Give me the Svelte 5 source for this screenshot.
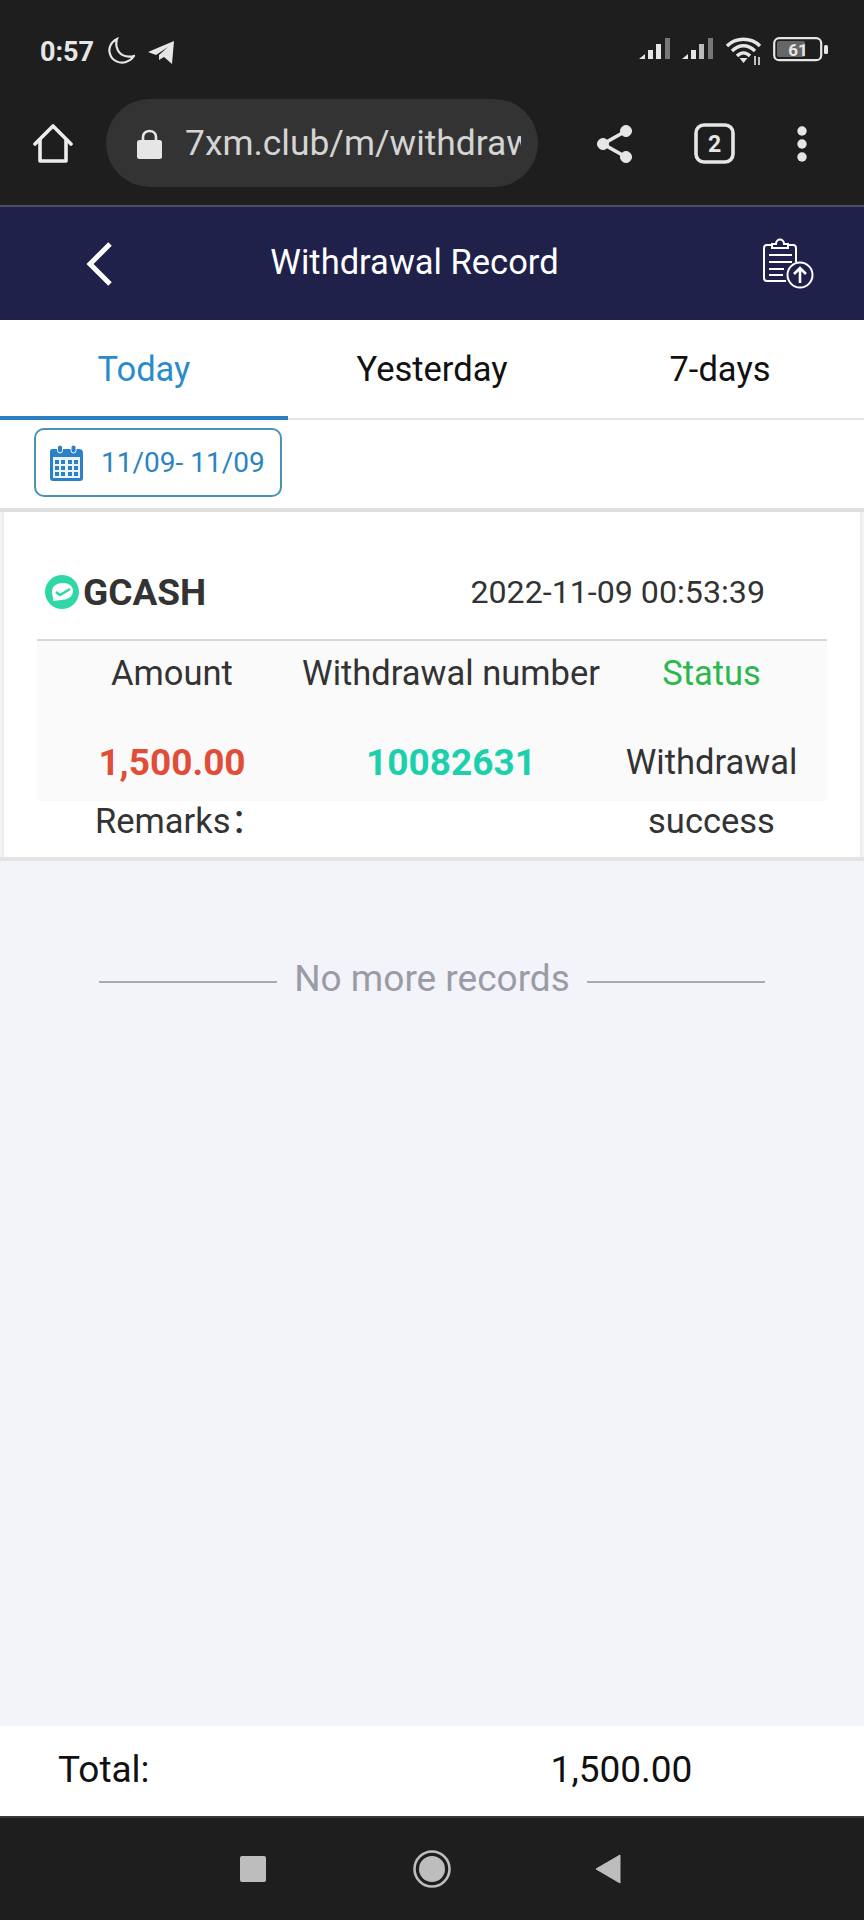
<script>
    const tabs = ["Today", "Yesterday", "7-days"];
    let active = 0;
</script>

<style>
    :global(body) {
        margin: 0;
        background: #f3f4f9;
    }
    .page {
        width: 864px;
        height: 1920px;
        display: flex;
        flex-direction: column;
        font-family: Roboto, "Noto Sans CJK SC", sans-serif;
        color: #333;
        overflow: hidden;
    }
    svg {
        display: block;
        flex: none;
    }
    .statusbar {
        height: 99px;
        box-sizing: border-box;
        background: #1e1e1e;
        display: flex;
        align-items: flex-start;
        padding: 37px 36px 0 40px;
        color: #e6e6e6;
    }
    .time {
        font-size: 27px;
        font-weight: 700;
        line-height: 30px;
        margin-right: 13px;
    }
    .moon {
        margin-right: 12px;
    }
    .tele {
        margin-top: 3px;
    }
    .status-right {
        margin-left: auto;
        display: flex;
        gap: 11px;
        align-items: flex-start;
    }
    .toolbar {
        height: 106px;
        box-sizing: border-box;
        background: #1e1e1e;
        display: flex;
        align-items: flex-start;
        padding-left: 33px;
    }
    .home {
        margin-top: 24px;
        margin-right: 33px;
    }
    .url {
        width: 432px;
        height: 88px;
        box-sizing: border-box;
        border-radius: 44px;
        background: #333;
        display: flex;
        align-items: center;
        padding: 0 17px 0 31px;
        color: #d4d4d4;
        font-size: 35.4px;
        gap: 23px;
    }
    .url span {
        overflow: hidden;
        white-space: nowrap;
    }
    .share {
        margin: 26px 61px 0 59px;
    }
    .count {
        margin-top: 24px;
        margin-right: 62px;
    }
    .dots {
        margin-top: 27px;
    }
    .header {
        height: 115px;
        box-sizing: border-box;
        border-top: 2px solid #4c4c62;
        background: #20214a;
        display: flex;
        align-items: center;
        position: relative;
        color: #fff;
        padding-left: 84px;
    }
    .title {
        position: absolute;
        left: 0;
        right: 35px;
        top: 25px;
        line-height: 60px;
        text-align: center;
        font-size: 34.5px;
    }
    .upload {
        margin-left: auto;
        margin-right: 50px;
    }
    .tabs {
        height: 100px;
        box-sizing: border-box;
        display: flex;
        background: #fff;
        border-bottom: 2px solid #e4e4e6;
    }
    .tab {
        flex: 1 1 0;
        height: 100px;
        box-sizing: border-box;
        text-align: center;
        font-size: 34.5px;
        line-height: 98px;
        color: #111;
    }
    .tab.active {
        color: #2b8ccb;
        border-bottom: 4px solid #2b80c4;
    }
    .dates {
        height: 92px;
        box-sizing: border-box;
        background: #fff;
        border-bottom: 4px solid #dfdfdf;
        padding: 8px 0 0 34px;
    }
    .date-btn {
        width: 248px;
        height: 69px;
        box-sizing: border-box;
        border: 2px solid #4a93b5;
        border-radius: 10px;
        display: flex;
        align-items: center;
        gap: 18px;
        padding-left: 14px;
        color: #2b84c0;
        font-size: 28px;
    }
    .card {
        margin: 0 2px;
        height: 345px;
        box-sizing: border-box;
        background: #fff;
        border-left: 2px solid #ececec;
        border-right: 2px solid #ececec;
        padding: 0 33px;
        flex: none;
    }
    .card-head {
        height: 129px;
        box-sizing: border-box;
        padding: 33px 62px 0 8px;
        display: flex;
        align-items: center;
        border-bottom: 2px solid #d8d8d8;
    }
    .card-head b {
        font-size: 37px;
        margin-left: 4px;
    }
    .card-head span {
        margin-left: auto;
        font-size: 32.2px;
    }
    .table {
        height: 160px;
        background: #fafafa;
        display: grid;
        grid-template-columns: 270px 288px 233px;
        grid-template-rows: 70px 59px;
        text-align: center;
        font-size: 34.5px;
    }
    .table > div {
        line-height: 59px;
    }
    .label {
        padding-top: 3px;
        white-space: nowrap;
        display: flex;
        justify-content: center;
    }
    .status {
        color: #2bb84c;
    }
    .amount,
    .number {
        font-size: 37px;
        font-weight: 700;
        padding-top: 22px;
    }
    .amount {
        color: #e24d37;
    }
    .number {
        color: #1dd0ad;
    }
    .result {
        padding-top: 22px;
    }
    .remarks {
        height: 40px;
        line-height: 40px;
        font-size: 34.5px;
        padding-left: 58px;
    }
    .list {
        flex: 1;
        border-top: 4px solid #e4e4e4;
        padding-top: 92px;
        display: flex;
        align-items: flex-start;
        color: #9a9ba6;
        font-size: 37px;
        line-height: 52px;
        justify-content: center;
    }
    .list i {
        display: block;
        width: 178px;
        height: 2px;
        background: #a9a9b0;
        margin-top: 28px;
    }
    .list span {
        margin: 0 17px;
    }
    .total {
        height: 86px;
        padding-bottom: 4px;
        flex: none;
        background: #fff;
        display: flex;
        align-items: center;
        padding-left: 58px;
        color: #111;
        font-size: 37px;
    }
    .total span:last-child {
        margin-left: 401px;
    }
    .navbar {
        height: 104px;
        flex: none;
        box-sizing: border-box;
        background: #1e1e1e;
        border-top: 2px solid #3a3a3a;
        display: flex;
        align-items: center;
        padding: 0 0 0 240px;
    }
    .square {
        width: 26px;
        height: 26px;
        background: #bdbdbd;
        border-radius: 2px;
        margin-right: 147px;
    }
    .circle {
        margin-right: 144px;
    }
</style>

<div class="page">
    <div class="statusbar">
        <span class="time">0:57</span>
        <svg class="moon" width="28" height="28" viewBox="0 0 28 28" fill="none" stroke="#e6e6e6" stroke-width="2.2">
            <path d="M10 2 C4 5 1 11 3 17 C5 24 13 27 19 25 C22 24 25 22 27 19 C19 21 12 18 10 11 C9 8 9 5 10 2 Z" />
        </svg>
        <svg class="tele" width="28" height="24" viewBox="0 0 28 24" fill="#e6e6e6">
            <path d="M1 12 L27 1 L25 24 L17 17 L12 20 L12 15 L21 7 L9 15 Z" />
        </svg>
        <div class="status-right">
            <svg width="32" height="24" viewBox="0 0 32 24" fill="#e6e6e6">
                <path d="M0 22 L6 17 L6 22 Z" />
                <rect x="9" y="13" width="5" height="9" />
                <rect x="17" y="7" width="5" height="15" />
                <rect x="26" y="1" width="5" height="21" fill="#777" />
            </svg>
            <svg width="33" height="24" viewBox="0 0 33 24" fill="#e6e6e6">
                <path d="M0 22 L6 17 L6 22 Z" />
                <rect x="9" y="13" width="5" height="9" />
                <rect x="17" y="7" width="5" height="15" fill="#bbb" />
                <rect x="26" y="1" width="5" height="21" fill="#777" />
            </svg>
            <svg width="36" height="28" viewBox="0 0 36 28" fill="none" stroke="#e6e6e6" stroke-width="3.4">
                <path d="M1 9 C10 0 25 0 34 9" />
                <path d="M6 14 C13 7 22 7 29 14" />
                <path d="M11 19 C15 15 20 15 24 19" />
                <path d="M13.500 21 L17.500 26 L21.500 21 Z" fill="#e6e6e6" stroke="none" />
                <path d="M29 19 V28 M33 20 V28" stroke-width="1.6" />
            </svg>
            <svg width="55" height="25" viewBox="0 0 55 25">
                <rect x="1.2" y="1.2" width="47" height="22" rx="5" fill="none" stroke="#e6e6e6" stroke-width="2.2" />
                <rect x="4" y="4" width="28" height="16" rx="2" fill="#666" />
                <rect x="51" y="8" width="4" height="9" rx="1.5" fill="#e6e6e6" />
                <text x="25" y="19" text-anchor="middle" font-family="Roboto" font-size="17" font-weight="700" fill="#e6e6e6">61</text>
            </svg>
        </div>
    </div>

    <div class="toolbar">
        <svg class="home" width="40" height="40" viewBox="0 0 40 40" fill="none" stroke="#ededed" stroke-width="3.6" stroke-linejoin="round" stroke-linecap="round">
            <path d="M2 21 L20 3 L38 21" />
            <path d="M7 17 V38 H33 V17" />
        </svg>
        <div class="url">
            <svg width="25" height="31" viewBox="0 0 25 31">
                <path d="M6 13 V9 C6 1 19 1 19 9 V13" fill="none" stroke="#e6e6e6" stroke-width="2.6" />
                <rect x="0" y="12" width="25" height="19" rx="2.5" fill="#e6e6e6" />
            </svg>
            <span>7xm.club/m/withdrawal</span>
        </div>
        <svg class="share" width="36" height="38" viewBox="0 0 36 38" fill="#e6e6e6" stroke="#e6e6e6">
            <circle cx="29" cy="6" r="5.5" />
            <circle cx="6" cy="19" r="5.5" />
            <circle cx="29" cy="32" r="5.5" />
            <path d="M29 6 L6 19 L29 32" fill="none" stroke-width="3.6" />
        </svg>
        <svg class="count" width="41" height="41" viewBox="0 0 41 41">
            <rect x="2" y="2" width="37" height="37" rx="8" fill="none" stroke="#e6e6e6" stroke-width="3.6" />
            <text x="20.5" y="29" text-anchor="middle" font-family="Roboto" font-size="23" font-weight="700" fill="#e6e6e6">2</text>
        </svg>
        <svg class="dots" width="10" height="36" viewBox="0 0 10 36" fill="#e6e6e6">
            <circle cx="5" cy="5" r="4.7" />
            <circle cx="5" cy="18" r="4.7" />
            <circle cx="5" cy="31" r="4.7" />
        </svg>
    </div>

    <div class="header">
        <svg width="30" height="46" viewBox="0 0 30 46" fill="none" stroke="#fff" stroke-width="5">
            <path d="M26 3 L6 23 L26 43" />
        </svg>
        <div class="title">Withdrawal Record</div>
        <svg class="upload" width="52" height="52" viewBox="0 0 52 52" fill="none" stroke="#fff" stroke-width="2">
            <path d="M34 24 V10 Q34 7 31 7 H26 M10 7 H5 Q2 7 2 10 V40 Q2 43 5 43 H24" />
            <path d="M10 10 V6 H14 C14 0 22 0 22 6 H26 V10 Z" />
            <path d="M7 17 H30 M7 24 H30 M7 31 H22 M7 37 H21" />
            <circle cx="38" cy="37" r="12.500" />
            <path d="M38 45 V30 M32 36 L38 30 L44 36" stroke-width="2.6" />
        </svg>
    </div>

    <div class="tabs">
        {#each tabs as tab, i}
            <div class="tab" class:active={i === active}>{tab}</div>
        {/each}
    </div>

    <div class="dates">
        <div class="date-btn">
            <svg width="33" height="36" viewBox="0 0 33 36" fill="#2b80c8">
                <path d="M2 4 H29 Q33 4 33 8 V33 Q33 36 30 36 H3 Q0 36 0 33 V7 Q0 4 2 4 Z" />
                <rect x="3" y="12" width="27" height="21" fill="#eaf4fb" />
                <g>
                    <rect x="5" y="15" width="4" height="4" />
                    <rect x="11" y="15" width="4" height="4" />
                    <rect x="18" y="15" width="4" height="4" />
                    <rect x="24" y="15" width="4" height="4" />
                    <rect x="5" y="21" width="4" height="4" />
                    <rect x="11" y="21" width="4" height="4" />
                    <rect x="18" y="21" width="4" height="4" />
                    <rect x="24" y="21" width="4" height="4" />
                    <rect x="5" y="27" width="4" height="4" />
                    <rect x="11" y="27" width="4" height="4" />
                    <rect x="18" y="27" width="4" height="4" />
                    <rect x="24" y="27" width="4" height="4" />
                </g>
                <rect x="7.500" y="0" width="5" height="8" rx="2.500" stroke="#fff" />
                <rect x="21" y="0" width="5" height="8" rx="2.500" stroke="#fff" />
            </svg>
            <span>11/09- 11/09</span>
        </div>
    </div>

    <div class="card">
        <div class="card-head">
            <svg width="34" height="34" viewBox="0 0 34 34">
                <circle cx="17" cy="17" r="17" fill="#2fd6a8" />
                <path d="M7 17 C7 11 12 8 18 8 C24 8 28 11 28 16 C28 22 22 25 16 25 C13 25 11 26 8 26 C9 24 7 21 7 17 Z" fill="#fff" />
                <path d="M11 17 L15 20 L25 14" fill="none" stroke="#2fd6a8" stroke-width="2.4" />
            </svg>
            <b>GCASH</b>
            <span>2022-11-09 00:53:39</span>
        </div>
        <div class="table">
            <div class="label">Amount</div>
            <div class="label">Withdrawal number</div>
            <div class="label status">Status</div>
            <div class="amount">1,500.00</div>
            <div class="number">10082631</div>
            <div class="result">Withdrawal success</div>
        </div>
        <div class="remarks">Remarks：</div>
    </div>

    <div class="list">
        <i></i>
        <span>No more records</span>
        <i></i>
    </div>

    <div class="total">
        <span>Total:</span>
        <span>1,500.00</span>
    </div>

    <div class="navbar">
        <div class="square"></div>
        <svg class="circle" width="38" height="38" viewBox="0 0 38 38">
            <circle cx="19" cy="19" r="17.5" fill="none" stroke="#bdbdbd" stroke-width="2.6" />
            <circle cx="19" cy="19" r="13" fill="#bdbdbd" />
        </svg>
        <svg width="26" height="30" viewBox="0 0 26 30" fill="#bdbdbd">
            <path d="M25 1 V29 L1 15 Z" stroke="#bdbdbd" stroke-linejoin="round" />
        </svg>
    </div>
</div>
